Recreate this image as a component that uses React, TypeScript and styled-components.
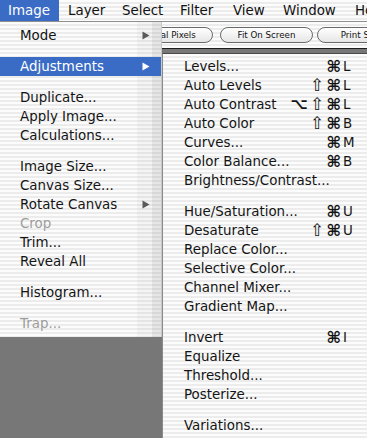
import React from "react";
import styled, { createGlobalStyle } from "styled-components";

const GlobalStyle = createGlobalStyle`
  html, body {
    margin: 0;
    padding: 0;
    background: #777777;
  }
  body {
    font-family: "DejaVu Sans", "Open Sans", sans-serif;
    -webkit-font-smoothing: antialiased;
  }
`;

const stripes = `repeating-linear-gradient(to bottom, #fcfcfc 0px, #fcfcfc 2px, #ececec 2px, #ececec 4px)`;

const Screen = styled.div`
  position: relative;
  width: 367px;
  height: 438px;
  overflow: hidden;
  display: flex;
  flex-direction: column;
  background: #777777;
`;

const MenuBar = styled.div`
  display: flex;
  height: 21px;
  border-bottom: 1px solid #8e8e8e;
  background: ${stripes};
  font-size: 13.4px;
  color: #111;
`;

const MenuTitle = styled.div<{ $w: number; $active?: boolean }>`
  flex: 0 0 ${(p) => p.$w}px;
  box-sizing: border-box;
  padding-left: ${(p) => (p.$active ? 8 : 9)}px;
  line-height: 21px;
  white-space: nowrap;
  background: ${(p) => (p.$active ? "#3a6cc5" : "transparent")};
  color: ${(p) => (p.$active ? "#fff" : "#111")};
`;

const Workspace = styled.div`
  flex: 1;
  display: flex;
  flex-direction: column;
`;

const OptionsBar = styled.div`
  display: flex;
  align-items: flex-start;
  height: 27px;
  padding: 5px 0 0 124px;
  box-sizing: border-box;
  border-bottom: 1px solid #1e1e1e;
  background: ${stripes};
`;

const PillButton = styled.div<{ $w: number; $gap: number }>`
  flex: 0 0 ${(p) => p.$w}px;
  margin-left: ${(p) => p.$gap}px;
  height: 16px;
  box-sizing: border-box;
  border: 1px solid #6a6a6a;
  border-radius: 8px;
  background: linear-gradient(to bottom, #ffffff, #e6e6e6);
  display: flex;
  align-items: center;
  justify-content: center;
  font-size: 8.7px;
  color: #111;
  white-space: nowrap;
  overflow: hidden;
`;

const DropMenu = styled.div`
  position: absolute;
  top: 22px;
  left: 0;
  width: 162px;
  box-sizing: border-box;
  padding: 4px 0;
  border-right: 1px solid #c8c8c8;
  background:
    linear-gradient(to right, transparent 137px, rgba(0, 0, 0, 0.03) 137px, rgba(0, 0, 0, 0.03) 152px, rgba(0, 0, 0, 0.09) 152px),
    ${stripes};
`;

const SubMenu = styled.div`
  position: absolute;
  top: 53px;
  left: 162px;
  width: 205px;
  box-sizing: border-box;
  padding: 3px 0 4px;
  border-top: 1px solid #4a4a4a;
  border-left: 1px solid #8a8a8a;
  background: ${stripes};
`;

const Item = styled.div<{ $indent: number; $active?: boolean; $disabled?: boolean }>`
  display: flex;
  align-items: center;
  height: 19px;
  padding-left: ${(p) => p.$indent}px;
  font-size: 13.4px;
  white-space: nowrap;
  background: ${(p) => (p.$active ? "#3a6cc5" : "transparent")};
  color: ${(p) => (p.$active ? "#fff" : p.$disabled ? "#9c9c9c" : "#141414")};
`;

const Label = styled.span`
  flex: 1;
`;

const Mods = styled.span`
  display: flex;
  align-items: center;
  gap: 2px;
`;

const ModGlyph = styled.span<{ $size: number; $bold: boolean }>`
  font-size: ${(p) => p.$size}px;
  font-weight: ${(p) => (p.$bold ? "bold" : "normal")};
  line-height: 1;
`;

const Key = styled.span`
  flex: 0 0 12px;
  margin-left: 2px;
  margin-right: 12px;
`;

const Separator = styled.div`
  height: 12px;
`;

const Arrow = ({ color }: { color: string }) => (
  <svg width="8" height="9" viewBox="0 0 8 9" style={{ marginRight: 11, flex: "0 0 8px" }}>
    <polygon points="0.5,0.5 7.5,4.5 0.5,8.5" fill={color} />
  </svg>
);

const glyphStyle: Record<string, { size: number; bold: boolean }> = {
  "⌘": { size: 16, bold: true },
  "⇧": { size: 17, bold: false },
  "⌥": { size: 15, bold: true },
};

type Entry = {
  label?: string;
  mods?: string[];
  key?: string;
  sub?: boolean;
  active?: boolean;
  disabled?: boolean;
  sep?: boolean;
};

const imageMenu: Entry[] = [
  { label: "Mode", sub: true },
  { sep: true },
  { label: "Adjustments", sub: true, active: true },
  { sep: true },
  { label: "Duplicate..." },
  { label: "Apply Image..." },
  { label: "Calculations..." },
  { sep: true },
  { label: "Image Size..." },
  { label: "Canvas Size..." },
  { label: "Rotate Canvas", sub: true },
  { label: "Crop", disabled: true },
  { label: "Trim..." },
  { label: "Reveal All" },
  { sep: true },
  { label: "Histogram..." },
  { sep: true },
  { label: "Trap...", disabled: true },
];

const adjustMenu: Entry[] = [
  { label: "Levels...", mods: ["⌘"], key: "L" },
  { label: "Auto Levels", mods: ["⇧", "⌘"], key: "L" },
  { label: "Auto Contrast", mods: ["⌥", "⇧", "⌘"], key: "L" },
  { label: "Auto Color", mods: ["⇧", "⌘"], key: "B" },
  { label: "Curves...", mods: ["⌘"], key: "M" },
  { label: "Color Balance...", mods: ["⌘"], key: "B" },
  { label: "Brightness/Contrast..." },
  { sep: true },
  { label: "Hue/Saturation...", mods: ["⌘"], key: "U" },
  { label: "Desaturate", mods: ["⇧", "⌘"], key: "U" },
  { label: "Replace Color..." },
  { label: "Selective Color..." },
  { label: "Channel Mixer..." },
  { label: "Gradient Map..." },
  { sep: true },
  { label: "Invert", mods: ["⌘"], key: "I" },
  { label: "Equalize" },
  { label: "Threshold..." },
  { label: "Posterize..." },
  { sep: true },
  { label: "Variations..." },
];

const renderEntries = (entries: Entry[], indent: number) =>
  entries.map((e, i) =>
    e.sep ? (
      <Separator key={i} />
    ) : (
      <Item key={i} $indent={indent} $active={e.active} $disabled={e.disabled}>
        <Label>{e.label}</Label>
        {e.sub && <Arrow color={e.active ? "#ffffff" : "#5a5a5a"} />}
        {e.key && (
          <>
            <Mods>
              {e.mods?.map((m) => (
                <ModGlyph key={m} $size={glyphStyle[m].size} $bold={glyphStyle[m].bold}>
                  {m}
                </ModGlyph>
              ))}
            </Mods>
            <Key>{e.key}</Key>
          </>
        )}
      </Item>
    )
  );

const titles = [
  { name: "Image", w: 59, active: true },
  { name: "Layer", w: 54 },
  { name: "Select", w: 58 },
  { name: "Filter", w: 53 },
  { name: "View", w: 50 },
  { name: "Window", w: 72 },
  { name: "Help", w: 60 },
];

export default function App() {
  return (
    <>
      <GlobalStyle />
      <Screen>
        <MenuBar>
          {titles.map((t) => (
            <MenuTitle key={t.name} $w={t.w} $active={t.active}>
              {t.name}
            </MenuTitle>
          ))}
        </MenuBar>
        <Workspace>
          <OptionsBar>
            <PillButton $w={89} $gap={0}>Actual Pixels</PillButton>
            <PillButton $w={93} $gap={7}>Fit On Screen</PillButton>
            <PillButton $w={88} $gap={4}>Print Size</PillButton>
          </OptionsBar>
        </Workspace>
        <DropMenu>{renderEntries(imageMenu, 20)}</DropMenu>
        <SubMenu>{renderEntries(adjustMenu, 21)}</SubMenu>
      </Screen>
    </>
  );
}
